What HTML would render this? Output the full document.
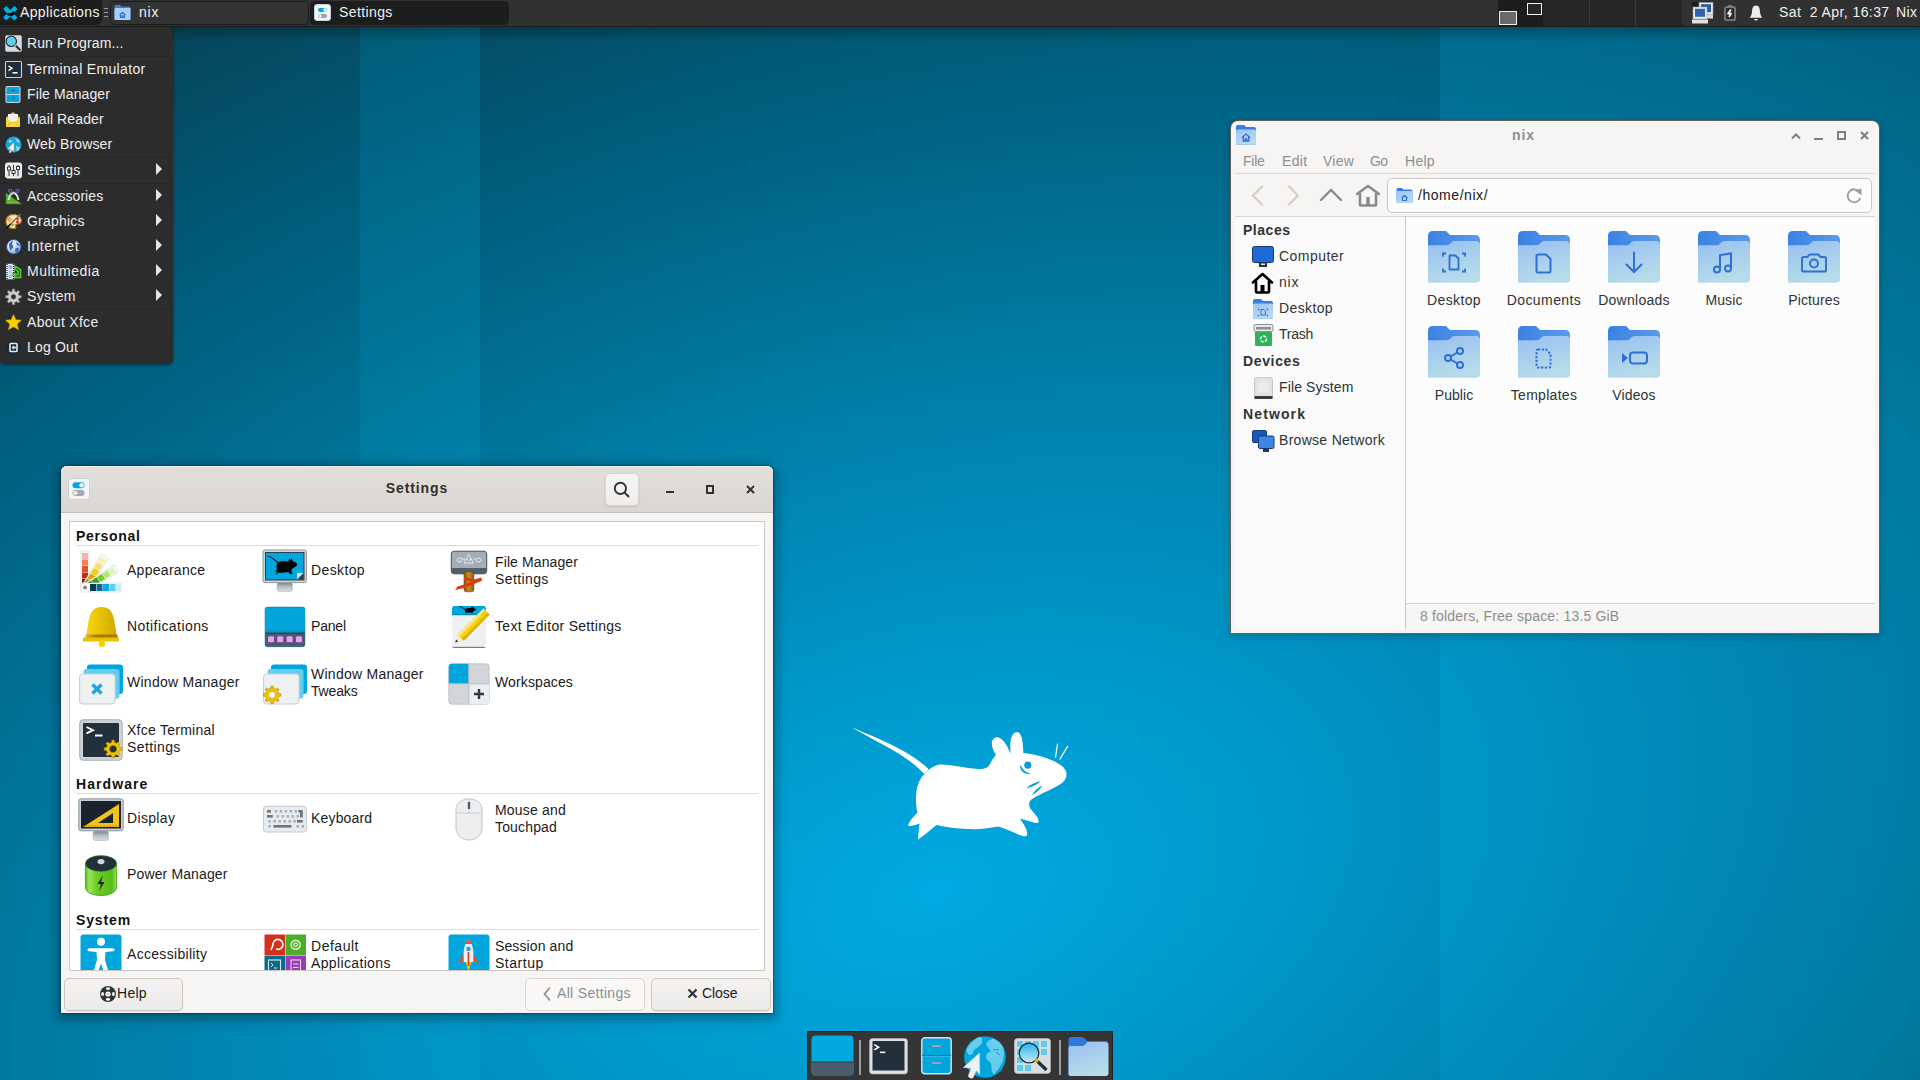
<!DOCTYPE html>
<html><head><meta charset="utf-8">
<style>
*{margin:0;padding:0;box-sizing:border-box}
html,body{width:1920px;height:1080px;overflow:hidden}
body{position:relative;font-family:"Liberation Sans",sans-serif;font-size:14px;letter-spacing:.27px;color:#222;background:#0a6a90;line-height:1}
.a{position:absolute}
.b{font-weight:bold;letter-spacing:.6px}
.nw{white-space:nowrap}
svg.i{position:absolute;display:block;overflow:visible}
#bg{left:0;top:0;width:1920px;height:1080px;
background:radial-gradient(ellipse 3599px 2665px at 1056px 1077px, rgb(0,168,224) 0%, rgb(0,165,219) 5%, rgb(0,159,211) 10%, rgb(0,151,200) 15%, rgb(0,141,187) 20%, rgb(0,130,172) 25%, rgb(0,118,156) 30%, rgb(0,105,138) 35%, rgb(1,90,118) 40%, rgb(6,74,96) 45%, rgb(6,56,72) 50%);}
.band{top:26px;height:1054px}
#panel{left:0;top:0;width:1920px;height:27px;background:#313131;border-bottom:1px solid #1c1c1c}
.ptxt{color:#f0f0f0;top:5px}
#menu{left:0;top:27px;width:173px;height:337px;background:#2c2c2c;border-radius:0 5px 5px 5px;box-shadow:0 1px 3px rgba(0,0,0,.5)}
.mi{left:27px;color:#eeeeee}
.msep{left:0;width:173px;height:1px;background:#262626}
.arr{left:156px;width:0;height:0;border-top:6px solid transparent;border-bottom:6px solid transparent;border-left:6px solid #e6e6e6}
.win{background:#f6f5f4;box-shadow:0 0 0 1px rgba(0,20,30,.3),0 3px 12px 3px rgba(0,0,0,.35)}
.st{color:#1a1a1a}
.hdr{color:#111;font-weight:bold;letter-spacing:.6px}
.sep{height:1px;background:#dedcda}
.btn{border:1px solid #cdc7c2;border-radius:5px;background:linear-gradient(#f4f3f2,#edebe9);box-shadow:0 1px 1px rgba(0,0,0,.07)}
.fmt{color:#2e3436}
.mt{color:#8b8e8f}
</style></head><body>
<div class="a" style="left:0px;top:0;width:360px;height:1080px;overflow:hidden"><div class="a" style="left:-2067.0px;top:-2108.4px;width:6000px;height:6000px;transform:rotate(-15.949deg);background:radial-gradient(ellipse 2240px 1369px at 3000px 3000px, rgb(0,172,230) 0%, rgb(0,162,216) 10%, rgb(0,150,199) 20%, rgb(0,137,182) 30%, rgb(0,124,164) 40%, rgb(0,110,146) 50%, rgb(0,96,127) 60%, rgb(2,82,108) 70%, rgb(6,68,88) 80%, rgb(6,53,68) 90%, rgb(6,38,48) 100%)"></div></div>
<div class="a" style="left:360px;top:0;width:120px;height:1080px;overflow:hidden"><div class="a" style="left:-2427.0px;top:-2108.4px;width:6000px;height:6000px;transform:rotate(-15.949deg);background:radial-gradient(ellipse 2240px 1369px at 3000px 3000px, rgb(0,170,224) 0%, rgb(0,162,213) 10%, rgb(0,152,200) 20%, rgb(0,141,186) 30%, rgb(0,130,171) 40%, rgb(0,119,156) 50%, rgb(0,108,141) 60%, rgb(0,96,125) 70%, rgb(1,84,109) 80%, rgb(5,72,93) 90%, rgb(6,60,77) 100%)"></div></div>
<div class="a" style="left:480px;top:0;width:960px;height:1080px;overflow:hidden"><div class="a" style="left:-2547.0px;top:-2108.4px;width:6000px;height:6000px;transform:rotate(-15.949deg);background:radial-gradient(ellipse 2240px 1369px at 3000px 3000px, rgb(0,170,226) 0%, rgb(0,159,212) 10%, rgb(0,147,195) 20%, rgb(0,134,178) 30%, rgb(0,120,159) 40%, rgb(0,106,141) 50%, rgb(0,92,121) 60%, rgb(4,77,102) 70%, rgb(6,62,82) 80%, rgb(6,47,62) 90%, rgb(6,32,41) 100%)"></div></div>
<div class="a" style="left:1440px;top:0;width:480px;height:1080px;overflow:hidden"><div class="a" style="left:-3507.0px;top:-2108.4px;width:6000px;height:6000px;transform:rotate(-15.949deg);background:radial-gradient(ellipse 2240px 1369px at 3000px 3000px, rgb(0,174,228) 0%, rgb(0,165,217) 10%, rgb(0,154,203) 20%, rgb(0,143,189) 30%, rgb(0,131,174) 40%, rgb(0,120,158) 50%, rgb(0,107,142) 60%, rgb(0,95,126) 70%, rgb(2,82,109) 80%, rgb(6,69,93) 90%, rgb(6,56,76) 100%)"></div></div>

<div class="a" style="left:0;top:26px;width:1920px;height:16px;background:linear-gradient(180deg,rgba(0,0,0,.28),rgba(0,0,0,0))"></div>

<!-- PANEL -->
<div id="panel" class="a">
  <div class="a" style="left:0;top:0;width:102px;height:25px;background:#1d1d1d;border-radius:0 0 6px 0"></div>
  <svg class="i" style="left:3px;top:6px" width="15" height="15" viewBox="0 0 15 15">
    <path d="M1.7 1.5 L12.9 13 M12.9 1.5 L1.7 13" stroke="#00b4e6" stroke-width="4.4"/>
    <path d="M3.6 8.2 C4.5 7 7 7.2 9.2 6.6 L10.5 4.6 L11 6.4 L12 7 C11.6 8.6 10.5 9.3 9.5 9.5 L9.2 10.6 L8.2 9.7 C6.5 9.8 4.5 9.8 3.6 8.2Z" fill="#000"/>
  </svg>
  <div class="a ptxt nw" style="left:20px;letter-spacing:0.355px;">Applications</div>
  <div class="a" style="left:104px;top:8px;width:4px;height:1px;background:#9a9a9a"></div>
  <div class="a" style="left:104px;top:12px;width:4px;height:1px;background:#9a9a9a"></div>
  <div class="a" style="left:104px;top:16px;width:4px;height:1px;background:#9a9a9a"></div>
  <div class="a" style="left:110px;top:1px;width:199px;height:24px;background:#333333;border:1px solid #1b1b1b;border-radius:5px"></div>
  <svg class="i" style="left:114px;top:4px" width="17" height="17" viewBox="0 0 17 17">
    <path d="M0.5 2.5 q0-1.5 1.5-1.5 h4 l1.5 1.5 h7.5 q1.5 0 1.5 1.5 v11 q0 1-1 1 h-14 q-1 0-1-1z" fill="#3a7de0"/>
    <path d="M0.5 5 q0-1 1-1 h14 q1 0 1 1 v10 q0 1-1 1 h-14 q-1 0-1-1z" fill="#a9cdf5"/>
    <path d="M5.5 11 l3-2.6 l3 2.6 M6.5 10.3 v3.2 h4 v-3.2 M8 13.5 v-1.6 h1 v1.6" stroke="#2f6fd6" stroke-width="1.1" fill="none"/>
  </svg>
  <div class="a ptxt nw" style="left:139px;letter-spacing:0.820px;">nix</div>
  <div class="a" style="left:310px;top:1px;width:199px;height:24px;background:#1d1d1d;border-radius:5px"></div>
  <svg class="i" style="left:314px;top:4px" width="17" height="17" viewBox="0 0 17 17">
    <rect x="0.5" y="0.5" width="16" height="16" rx="2.5" fill="#f3f4f6" stroke="#c8d0d8" stroke-width="1"/>
    <rect x="4" y="4" width="9" height="4" rx="2" fill="#00a8dc"/><circle cx="11" cy="6" r="1.7" fill="#fff"/>
    <rect x="4" y="10" width="9" height="4" rx="2" fill="#9aa3ab"/><circle cx="6" cy="12" r="1.7" fill="#e8eaec"/>
  </svg>
  <div class="a ptxt nw" style="left:339px;letter-spacing:0.388px;">Settings</div>
  <!-- pager -->
  <div class="a" style="left:1498px;top:0;width:45px;height:26px;background:#1c1c1c"></div>
  <div class="a" style="left:1543px;top:0;width:139px;height:26px;background:#262626"></div>
  <div class="a" style="left:1589px;top:0;width:1px;height:26px;background:#3a3a3a"></div>
  <div class="a" style="left:1635px;top:0;width:1px;height:26px;background:#3a3a3a"></div>
  <div class="a" style="left:1499px;top:11px;width:18px;height:14px;background:#6a6a6a;border:1px solid #f0f0f0"></div>
  <div class="a" style="left:1527px;top:3px;width:15px;height:12px;background:#262626;border:1px solid #f0f0f0"></div>
  <!-- systray -->
  <svg class="i" style="left:1692px;top:2px" width="22" height="22" viewBox="0 0 22 22">
    <rect x="0" y="0" width="7" height="8" fill="#1d1d1d"/>
    <rect x="7" y="0.5" width="14" height="12" fill="#eeeeec" stroke="#9a9a98" stroke-width=".6"/>
    <rect x="9" y="2.2" width="10" height="8" fill="#2a5aa6"/>
    <rect x="10" y="12.5" width="11" height="4" fill="#dcdcd6"/>
    <rect x="1" y="5" width="14" height="12" fill="#eeeeec" stroke="#9a9a98" stroke-width=".6"/>
    <rect x="3" y="6.8" width="10" height="8" fill="#2f62b0"/>
    <rect x="0" y="17.5" width="16" height="4" fill="#e2e2dc"/>
  </svg>
  <svg class="i" style="left:1724px;top:5px" width="12" height="16" viewBox="0 0 12 16">
    <rect x="4" y="0" width="4" height="2" fill="#7a7a7a"/>
    <rect x="0.9" y="2" width="10.2" height="13.2" rx="2" fill="#2a2a2a" stroke="#7a7a7a" stroke-width="1.8"/>
    <path d="M7 4.5 L4 8.5 h3 L5 12" stroke="#f0f0f0" stroke-width="1.8" fill="none" stroke-linejoin="round"/>
  </svg>
  <svg class="i" style="left:1749px;top:5px" width="14" height="16" viewBox="0 0 14 16">
    <path d="M7 0.6 C3.8 0.6 3.2 3.5 3 7 C2.8 10 1.5 11.5 0.8 12.8 H13.2 C12.5 11.5 11.2 10 11 7 C10.8 3.5 10.2 0.6 7 0.6Z" fill="#ececec"/>
    <path d="M5 14 h4 q-.5 1.5-2 1.5 q-1.5 0-2-1.5z" fill="#ececec"/>
  </svg>
  <div class="a ptxt nw" style="left:1779px;letter-spacing:0.413px;">Sat&nbsp; 2 Apr, 16:37</div>
  <div class="a ptxt nw" style="left:1896px;letter-spacing:0.398px;">Nix</div>
</div>
<svg class="i" style="left:0;top:0" width="1920" height="1080" viewBox="0 0 1920 1080">
<path d="M852.1 727.6 C866 733.5 884 741 895 746.5 C908 753 920 761 928.8 769.2 L924.2 774 C916 765 906 758 896 752 C884 745 866 736 852.1 727.6Z" fill="#fff"/>
<path d="M924.5 774 C932 766 937 764.5 942 764.5 C953 765 965 768 978 769 C986 769.5 989 767 991 762 C993 758 995 756 996 755 C992 749 990 742 994 738.5 C998 735 1003 739 1007 746 L1010.5 753.5 C1010 744 1010 734 1016 732.3 C1021 731 1023 738 1023.3 753 C1035 754.5 1052 758 1062 766 C1068 771 1068 778 1062 783 C1055 788 1042 793 1032 799 C1028 802 1028.5 806 1031.5 810 C1035 814 1039 818 1038.5 822 C1038 824.5 1033 822 1020 818.5 C1024 825 1028 830 1027 835 C1026 837.5 1022 836 1015 833 C1008 830 1002 827.5 998 826.5 C988 828.5 978 829.5 968 829 C957 828.5 946 827.5 936.5 825 C930 830 925 835 918 839.5 C918.5 833 919 828 919.5 823.5 C915 825 911 826.5 908.5 826 C907.5 824 912 818 917.5 812.5 C915.5 805 915.5 796 917 788 C918.5 782 921 777 924.5 774Z" fill="#fff"/>
<circle cx="1027.8" cy="765.2" r="3.6" fill="#0a9dd4"/>
<path d="M1020.3 764.3 C1019.2 770.5 1024 775.2 1031.3 773.8 C1025.8 772.8 1022.3 769.5 1020.3 764.3Z" fill="#0aa0d6"/>
<path d="M1026.2 788.3 C1030.5 784.2 1036 781.8 1041 781 C1038 784 1032.5 787 1026.2 788.3Z" fill="#0aa0d6"/>
<path d="M1032 795.2 C1034.5 790.8 1038.3 787.3 1042.3 785.3 C1040.3 789.3 1036.5 792.8 1032 795.2Z" fill="#0aa0d6"/>
<path d="M1055.5 757.5 L1057.5 744" stroke="#fff" stroke-width="1.2" stroke-linecap="round"/>
<path d="M1060 759 L1067.5 746.5" stroke="#fff" stroke-width="1.4" stroke-linecap="round"/>
</svg>
<div id="menu" class="a">
<div class="a mi nw" style="top:9.2px;letter-spacing:0.106px;">Run Program...</div>
<svg class="i" style="left:5px;top:8px" width="17" height="17" viewBox="0 0 17 17"><rect x="0.5" y="0.5" width="16" height="16" rx="1.5" fill="#d6dbe0" stroke="#b8bec4" stroke-width=".8"/>
<circle cx="6.3" cy="6.3" r="5.2" fill="#62cdec" stroke="#203040" stroke-width="1.2"/>
<path d="M10 10 L15.3 15.3" stroke="#203040" stroke-width="2.2"/><path d="M9.7 9.7 L11 11" stroke="#e5b800" stroke-width="2"/></svg>
<div class="a mi nw" style="top:35.2px;letter-spacing:0.335px;">Terminal Emulator</div>
<svg class="i" style="left:5px;top:34px" width="17" height="17" viewBox="0 0 17 17"><rect x="0.5" y="0.5" width="16" height="16" rx="1" fill="#1f2e3b" stroke="#c9ced3" stroke-width="1.1"/>
<path d="M3.5 5 L7 7.3 L3.5 9.6" stroke="#fff" stroke-width="1.4" fill="none"/><rect x="7.5" y="11" width="5" height="1.6" fill="#fff"/></svg>
<div class="a mi nw" style="top:60.2px;letter-spacing:0.109px;">File Manager</div>
<svg class="i" style="left:5px;top:59px" width="17" height="17" viewBox="0 0 17 17"><rect x="1" y="0.5" width="14" height="16" rx="1.5" fill="#00a6dc" stroke="#cfd6dc" stroke-width="1.1"/>
<path d="M1.5 8.5 h13" stroke="#d6dde2" stroke-width="1"/><path d="M6.5 4.5h3M6.5 12h3" stroke="#3a4a56" stroke-width="1"/></svg>
<div class="a mi nw" style="top:85.2px;letter-spacing:0.111px;">Mail Reader</div>
<svg class="i" style="left:5px;top:84px" width="17" height="17" viewBox="0 0 17 17"><path d="M1 6.5 L8 1 L15 6.5 V16 H1Z" fill="#f2c400"/><rect x="3" y="3" width="10" height="8" fill="#eef0f2"/>
<path d="M1 7 L8 12 L15 7 V16 H1Z" fill="#f6d84a"/><path d="M1 16 L6.5 11 M15 16 L9.5 11" stroke="#e0b800" stroke-width=".8"/></svg>
<div class="a mi nw" style="top:110.2px;letter-spacing:0.139px;">Web Browser</div>
<svg class="i" style="left:5px;top:109px" width="17" height="17" viewBox="0 0 17 17"><circle cx="8.5" cy="8.5" r="8" fill="#1ea3d6"/><path d="M4 4 q2-1 3 1 q-1 2-3 2z M10 2 q3 1 5 4 q-2 1-3 0 q-1-2-2-4z M11 10 q3 0 4 2 q-1 3-3 3 q-1-2-1-5z" fill="#8fd8f2"/>
<path d="M9 6 L2.5 13 L5.5 13.3 L3.8 16.5 L5.5 17 L7 14 L9.3 15.8Z" fill="#f2f4f6" stroke="#6a7a88" stroke-width=".4"/></svg>
<div class="a mi nw" style="top:136.2px;letter-spacing:0.388px;">Settings</div>
<svg class="i" style="left:5px;top:135px" width="17" height="17" viewBox="0 0 17 17"><rect x="0.5" y="1" width="16" height="15" rx="2" fill="#e6e7e8" stroke="#f8f8f8" stroke-width="1"/>
<path d="M4 3v11M8.5 3v11M13 3v11" stroke="#303a42" stroke-width="1"/><rect x="2.5" y="5" width="3" height="3" fill="#fff" stroke="#303a42" stroke-width="1"/><rect x="7" y="8.5" width="3" height="3" fill="#fff" stroke="#303a42" stroke-width="1"/><rect x="11.5" y="4.5" width="3" height="3" fill="#fff" stroke="#303a42" stroke-width="1"/></svg>
<div class="a mi nw" style="top:162.2px;letter-spacing:0.069px;">Accessories</div>
<svg class="i" style="left:5px;top:161px" width="17" height="17" viewBox="0 0 17 17"><path d="M1 5 L1 16 L16.5 16Z" fill="#56b02a" stroke="#3a8a18" stroke-width=".6"/><path d="M3.3 10.5 L3.3 14 L8 14Z" fill="#2a2a2a" opacity=".0"/><path d="M3 14.5 h11" stroke="#9ad36a" stroke-width=".8" stroke-dasharray="1 1"/>
<path d="M3.5 12 Q5 5 8.5 5 Q12 5 13.5 12" stroke="#e0e0e0" stroke-width="2" fill="none"/><path d="M8.5 5.5 v-2" stroke="#bbb" stroke-width="1.2"/>
<circle cx="5" cy="2.8" r="1.6" fill="#2a2a2a" stroke="#3a72c8" stroke-width="1.1"/><circle cx="12.5" cy="2.8" r="1.6" fill="#2a2a2a" stroke="#3a72c8" stroke-width="1.1"/></svg>
<div class="a mi nw" style="top:187.2px;letter-spacing:0.199px;">Graphics</div>
<svg class="i" style="left:5px;top:186px" width="17" height="17" viewBox="0 0 17 17"><path d="M8.5 1.5 C3.5 1.5 1 5 1 8.5 C1 13 4.5 15.5 8.5 15.5 C11 15.5 11.5 14 10.5 12.8 C9.8 11.8 10.6 11 12 11 C15 11 16.3 9.5 16.3 7.5 C16.3 3.8 12.8 1.5 8.5 1.5Z" fill="#f4e2c4" stroke="#c47a18" stroke-width="1.2"/>
<circle cx="4.5" cy="6.5" r="1.5" fill="none" stroke="#c47a18" stroke-width="1"/><circle cx="12.5" cy="5.8" r="1.4" fill="#2a6ad0"/><circle cx="12.5" cy="9" r="1.4" fill="#e02020"/><circle cx="7.5" cy="12" r="1.4" fill="#60c020"/>
<path d="M15.5 1.2 L5 11.5" stroke="#a06a20" stroke-width="1.5"/><path d="M5.5 11 L1.5 15.5" stroke="#111" stroke-width="1.8"/></svg>
<div class="a mi nw" style="top:212.2px;letter-spacing:0.592px;">Internet</div>
<svg class="i" style="left:5px;top:211px" width="17" height="17" viewBox="0 0 17 17"><defs><radialGradient id="gl" cx=".35" cy=".3" r=".8"><stop offset="0" stop-color="#ffffff"/><stop offset=".6" stop-color="#b8cce8"/><stop offset="1" stop-color="#7a98c8"/></radialGradient></defs>
<circle cx="8.8" cy="8.8" r="7.3" fill="url(#gl)" stroke="#284a88" stroke-width="1"/>
<path d="M4 6 q2-3 4-3 q0 2-1 3 q2 2 1 4 q-2 1-2 3 q-2-2-2-7z M10 11 q2-2 4-1 q0 3-2 5 q-2 0-2-4z M11 4 q3 1 4 4 q-2 0-3-1z" fill="#3a6cb8"/></svg>
<div class="a mi nw" style="top:237.2px;letter-spacing:0.510px;">Multimedia</div>
<svg class="i" style="left:5px;top:236px" width="17" height="17" viewBox="0 0 17 17"><rect x="1" y="0.8" width="8.5" height="15.5" fill="#f0f0f0"/><path d="M2 1v15M8.5 1v15" stroke="#222" stroke-width="1.4" stroke-dasharray="1 1"/>
<rect x="3.5" y="2" width="3.5" height="4" fill="#8cc0ec"/><rect x="3.5" y="6.8" width="3.5" height="4" fill="#a8d0f0"/><rect x="3.5" y="11.6" width="3.5" height="3.8" fill="#8cc0ec"/>
<path d="M10.5 3.5 L15.5 6.5 V14.5 H10.5 V11.5 H13 V8 L10.5 6.8Z" fill="none" stroke="#4cc52a" stroke-width="1.8" stroke-linejoin="round"/><path d="M7 11.5 h4" stroke="#4cc52a" stroke-width="2.5"/></svg>
<div class="a mi nw" style="top:262.2px;letter-spacing:0.356px;">System</div>
<svg class="i" style="left:5px;top:261px" width="17" height="17" viewBox="0 0 17 17"><path d="M13.97 7.60 L16.23 7.73 L16.23 9.87 L13.97 10.00 L13.22 11.82 L14.72 13.51 L13.21 15.02 L11.52 13.52 L9.70 14.27 L9.57 16.53 L7.43 16.53 L7.30 14.27 L5.48 13.52 L3.79 15.02 L2.28 13.51 L3.78 11.82 L3.03 10.00 L0.77 9.87 L0.77 7.73 L3.03 7.60 L3.78 5.78 L2.28 4.09 L3.79 2.58 L5.48 4.08 L7.30 3.33 L7.43 1.07 L9.57 1.07 L9.70 3.33 L11.52 4.08 L13.21 2.58 L14.72 4.09 L13.22 5.78Z" fill="#cfcfcd" stroke="#8a8a88" stroke-width=".7" stroke-linejoin="round"/><circle cx="8.5" cy="8.8" r="2.5" fill="#2c2c2c" stroke="#8a8a88" stroke-width=".6"/></svg>
<div class="a mi nw" style="top:288.2px;letter-spacing:0.299px;">About Xfce</div>
<svg class="i" style="left:5px;top:287px" width="17" height="17" viewBox="0 0 17 17"><path d="M8.5 0.5 L10.8 5.7 L16.5 6.2 L12.2 10 L13.5 15.8 L8.5 12.8 L3.5 15.8 L4.8 10 L0.5 6.2 L6.2 5.7Z" fill="#f6d200" stroke="#d8a800" stroke-width=".5"/></svg>
<div class="a mi nw" style="top:313.2px;letter-spacing:0.185px;">Log Out</div>
<svg class="i" style="left:5px;top:312px" width="17" height="17" viewBox="0 0 17 17"><circle cx="8.5" cy="8.5" r="7.8" fill="#1a2a36"/><rect x="5" y="4.5" width="7" height="8" rx=".8" fill="none" stroke="#e8eaec" stroke-width="1.6"/><path d="M11 8.5 H7.5 M9 7 L7.5 8.5 L9 10" stroke="#e8eaec" stroke-width="1.3" fill="none"/></svg>
<div class="a msep" style="top:29px"></div>
<div class="a msep" style="top:130px"></div>
<div class="a msep" style="top:156px"></div>
<div class="a msep" style="top:282px"></div>
<div class="a arr" style="top:136.2px"></div>
<div class="a arr" style="top:162.2px"></div>
<div class="a arr" style="top:187.2px"></div>
<div class="a arr" style="top:212.2px"></div>
<div class="a arr" style="top:237.2px"></div>
<div class="a arr" style="top:262.2px"></div>
</div>
<div id="fm" class="a win" style="left:1231px;top:121px;width:648px;height:512px;border-radius:7px 7px 0 0;box-shadow:0 0 0 1px rgba(115,95,85,.8),0 3px 9px 1px rgba(0,0,0,.22)">
<svg width="0" height="0" style="position:absolute"><defs>
<linearGradient id="fgs" x1="0" y1="0" x2="0.4" y2="1"><stop offset="0" stop-color="#9ec4f4"/><stop offset="1" stop-color="#b8dcee"/></linearGradient>
<linearGradient id="fgb" x1="0" y1="0" x2="0.35" y2="1"><stop offset="0" stop-color="#98bff2"/><stop offset="1" stop-color="#b6dcea"/></linearGradient>
<linearGradient id="ftb" x1="0" y1="0" x2="1" y2="0"><stop offset="0" stop-color="#3a82e2"/><stop offset="1" stop-color="#5b9ae8"/></linearGradient>
</defs></svg>
<svg class="i" style="left:4px;top:3px" width="22" height="22" viewBox="0 0 22 22"><path d="M1 3 q0-2 2-2 h6 l2 2 h8 q2 0 2 2 v14 q0 1.5-1.5 1.5 h-17 q-1.5 0-1.5-1.5z" fill="#3a7de0"/>
<path d="M1 7 q0-1.5 1.5-1.5 h17 q1.5 0 1.5 1.5 v12 q0 1.5-1.5 1.5 h-17 q-1.5 0-1.5-1.5z" fill="url(#fgs)"/><path d="M7 13.5 l4-3.5 l4 3.5 M8.3 12.6 v4.4 h5.4 v-4.4 M10.2 17 v-2.2 h1.6 v2.2" stroke="#2f6fd6" stroke-width="1.3" fill="none"/></svg>
<div class="a nw" style="left:281px;top:7.2px;font-weight:bold;letter-spacing:0.938px;color:#8b8e8f">nix</div>
<svg class="i" style="left:560px;top:10px" width="10" height="9" viewBox="0 0 10 9"><path d="M1 7.5 L5 3.5 L9 7.5" stroke="#7d8183" stroke-width="2" fill="none"/></svg>
<div class="a" style="left:583px;top:17px;width:9px;height:2px;background:#7d8183"></div>
<div class="a" style="left:606px;top:10px;width:9px;height:9px;border:2px solid #7d8183"></div>
<svg class="i" style="left:629px;top:10px" width="9" height="9" viewBox="0 0 9 9"><path d="M1 1 L8 8 M8 1 L1 8" stroke="#7d8183" stroke-width="2"/></svg>
<div class="a nw mt" style="left:12px;top:33.2px;letter-spacing:-0.266px;">File</div>
<div class="a nw mt" style="left:51px;top:33.2px;letter-spacing:0.349px;">Edit</div>
<div class="a nw mt" style="left:92px;top:33.2px;letter-spacing:0.250px;">View</div>
<div class="a nw mt" style="left:139px;top:33.2px;letter-spacing:-0.641px;">Go</div>
<div class="a nw mt" style="left:174px;top:33.2px;letter-spacing:0.286px;">Help</div>
<div class="a" style="left:4px;top:52px;width:640px;height:1px;background:#dedad6"></div>
<svg class="i" style="left:19px;top:64px" width="14" height="21" viewBox="0 0 14 21"><path d="M12 1.5 L3 10.5 L12 19.5" stroke="#d2cecb" stroke-width="2.2" fill="none" stroke-linecap="round"/></svg>
<svg class="i" style="left:56px;top:64px" width="14" height="21" viewBox="0 0 14 21"><path d="M2 1.5 L11 10.5 L2 19.5" stroke="#d2cecb" stroke-width="2.2" fill="none" stroke-linecap="round"/></svg>
<svg class="i" style="left:88px;top:67px" width="24" height="14" viewBox="0 0 24 14"><path d="M2 12 L12 2 L22 12" stroke="#868c8e" stroke-width="2.3" fill="none" stroke-linecap="round"/></svg>
<svg class="i" style="left:124px;top:63px" width="26" height="23" viewBox="0 0 26 23"><path d="M2 10 L13 2 L24 10" stroke="#868c8e" stroke-width="2.4" fill="none" stroke-linecap="round" stroke-linejoin="round"/><path d="M5 9 V20.5 q0 1 1 1 H20 q1 0 1-1 V9" stroke="#868c8e" stroke-width="2.6" fill="none"/><rect x="11.3" y="13" width="3.4" height="8" fill="#868c8e"/></svg>
<div class="a" style="left:156px;top:57px;width:485px;height:35px;border:1px solid #cdc7c2;border-radius:5px;background:#fcfcfc"></div>
<svg class="i" style="left:165px;top:66px" width="17" height="17" viewBox="0 0 17 17"><path d="M0.5 2.5 q0-1.5 1.5-1.5 h4 l1.5 1.5 h7.5 q1.5 0 1.5 1.5 v11 q0 1-1 1 h-14 q-1 0-1-1z" fill="#3a7de0"/><path d="M0.5 5 q0-1 1-1 h14 q1 0 1 1 v10 q0 1-1 1 h-14 q-1 0-1-1z" fill="url(#fgs)"/><path d="M5.5 11 l3-2.6 l3 2.6 M6.5 10.3 v3.2 h4 v-3.2" stroke="#2f6fd6" stroke-width="1.1" fill="none"/></svg>
<div class="a nw st" style="left:187px;top:67.2px;letter-spacing:0.549px;">/home/nix/</div>
<svg class="i" style="left:614px;top:66px" width="18" height="17" viewBox="0 0 18 17"><path d="M14.5 5 A6.5 6.5 0 1 0 15.3 11" stroke="#9a9ea0" stroke-width="1.8" fill="none"/><path d="M10.5 4 L16 2 L16 8" fill="#9a9ea0" stroke="#9a9ea0" stroke-width="1"/></svg>
<div class="a" style="left:4px;top:95px;width:640px;height:1px;background:#d8d4d0"></div>
<div class="a" style="left:4px;top:96px;width:170px;height:412px;background:#fafafa"></div>
<div class="a" style="left:174px;top:96px;width:1px;height:412px;background:#cdc7c2"></div>
<div class="a" style="left:175px;top:96px;width:469px;height:386px;background:#fcfcfc"></div>
<div class="a" style="left:175px;top:482px;width:469px;height:1px;background:#d8d4d0"></div>
<div class="a nw fmt b" style="left:12px;top:102.2px;letter-spacing:0.528px;">Places</div>
<div class="a nw fmt b" style="left:12px;top:233.1px;letter-spacing:0.646px;">Devices</div>
<div class="a nw fmt b" style="left:12px;top:286.1px;letter-spacing:1.115px;">Network</div>
<div class="a nw fmt" style="left:48px;top:128.2px;letter-spacing:0.453px;">Computer</div>
<div class="a nw fmt" style="left:48px;top:154.1px;letter-spacing:0.820px;">nix</div>
<div class="a nw fmt" style="left:48px;top:180.1px;letter-spacing:0.378px;">Desktop</div>
<div class="a nw fmt" style="left:48px;top:206.1px;letter-spacing:-0.227px;">Trash</div>
<div class="a nw fmt" style="left:48px;top:259.1px;letter-spacing:0.122px;">File System</div>
<div class="a nw fmt" style="left:48px;top:312.1px;letter-spacing:0.294px;">Browse Network</div>
<svg class="i" style="left:21px;top:125px" width="22" height="22" viewBox="0 0 22 22"><rect x="0.5" y="0.5" width="21" height="16" rx="2" fill="#1e6ad8" stroke="#1a3a60" stroke-width="1"/><rect x="7" y="17" width="8" height="4" fill="#2a3640"/><rect x="9" y="17.5" width="4" height="1.5" fill="#e8e8e8"/></svg>
<svg class="i" style="left:20px;top:151px" width="23" height="22" viewBox="0 0 23 22"><path d="M2 10.5 L11.5 2 L21 10.5" stroke="#000" stroke-width="2.6" fill="none" stroke-linejoin="round" stroke-linecap="round"/><path d="M5 9 V19.5 q0 1 1 1 H17 q1 0 1-1 V9" stroke="#000" stroke-width="2.6" fill="none"/><rect x="9.5" y="13" width="4" height="8" fill="#000"/></svg>
<svg class="i" style="left:21px;top:177px" width="22" height="22" viewBox="0 0 22 22"><path d="M1 3 q0-2 2-2 h6 l2 2 h8 q2 0 2 2 v14 q0 1.5-1.5 1.5 h-17 q-1.5 0-1.5-1.5z" fill="#3a7de0"/>
<path d="M1 7 q0-1.5 1.5-1.5 h17 q1.5 0 1.5 1.5 v12 q0 1.5-1.5 1.5 h-17 q-1.5 0-1.5-1.5z" fill="url(#fgs)"/><path d="M7.5 11 h-1.2 v1.5 M14.5 11 h1.2 v1.5 M7.5 18 h-1.2 v-1.5 M14.5 18 h1.2 v-1.5" stroke="#2f6fd6" stroke-width="1" fill="none"/><path d="M9 11.5 h3 l1.3 1.3 v4.2 h-4.3z" stroke="#2f6fd6" stroke-width="1" fill="none"/></svg>
<svg class="i" style="left:22px;top:203px" width="22" height="23" viewBox="0 0 22 23"><rect x="1" y="0.5" width="19" height="7" rx="1.5" fill="#e8e8e8" stroke="#909090" stroke-width="1"/><rect x="3" y="3" width="15" height="2.5" fill="#909090"/><path d="M2 8 H19 V20.5 q0 1.5-1.5 1.5 H3.5 q-1.5 0-1.5-1.5z" fill="#2eb35a"/><circle cx="10.5" cy="15" r="3" fill="none" stroke="#fff" stroke-width="1.4" stroke-dasharray="3 1.5"/></svg>
<svg class="i" style="left:23px;top:256px" width="19" height="23" viewBox="0 0 19 23"><rect x="0.5" y="0.5" width="18" height="21" rx="2.5" fill="#e2e2e2" stroke="#c8c8c8" stroke-width="1"/><circle cx="9.5" cy="10" r="6" fill="#ececec"/><rect x="0.5" y="19" width="18" height="3" fill="#3a3a3a"/></svg>
<svg class="i" style="left:21px;top:309px" width="23" height="23" viewBox="0 0 23 23"><rect x="0.5" y="0.5" width="14" height="12" rx="1.5" fill="#1a58b8" stroke="#163a78" stroke-width="1"/><rect x="6.5" y="6" width="15.5" height="12.5" rx="1.5" fill="#3d86e6" stroke="#163a78" stroke-width="1"/><rect x="11" y="19" width="6" height="3" fill="#2a3640"/></svg>
<svg class="i" style="left:197px;top:110px" width="52" height="52" viewBox="0 0 52 52"><path d="M0 5 q0-5 5-5 h13 l4 4 h25 q5 0 5 5 v38 q0 4-4 4 h-48z" fill="url(#ftb)"/>
<path d="M0 14.2 h18.5 q2 0 3.5-1.5 l1.5-1.5 q1.5-1.2 3.5-1.2 h21 q4 0 4 4 v33.7 q0 4-4 4 h-48z" fill="url(#fgb)"/><g transform="translate(0 2.5)"><path d="M15 23 v-3 h3 M37 23 v-3 h-3 M15 35 v3 h3 M37 35 v3 h-3" stroke="#2f6fd6" stroke-width="1.8" fill="none"/><path d="M21.5 22 h6 l3 3 v11 h-9z" stroke="#2f6fd6" stroke-width="1.8" fill="none" stroke-linejoin="round"/></g></svg>
<div class="a nw fmt" style="left:178px;width:90px;text-align:center;top:171.6px;letter-spacing:0.378px;">Desktop</div>
<svg class="i" style="left:287px;top:110px" width="52" height="52" viewBox="0 0 52 52"><path d="M0 5 q0-5 5-5 h13 l4 4 h25 q5 0 5 5 v38 q0 4-4 4 h-48z" fill="url(#ftb)"/>
<path d="M0 14.2 h18.5 q2 0 3.5-1.5 l1.5-1.5 q1.5-1.2 3.5-1.2 h21 q4 0 4 4 v33.7 q0 4-4 4 h-48z" fill="url(#fgb)"/><g transform="translate(0 2.5)"><path d="M20 21 h8 l4.5 4.5 v12 q0 1.5-1.5 1.5 h-11 q-1.5 0-1.5-1.5 v-15 q0-1.5 1.5-1.5z" stroke="#2f6fd6" stroke-width="2" fill="none" stroke-linejoin="round"/></g></svg>
<div class="a nw fmt" style="left:268px;width:90px;text-align:center;top:171.6px;letter-spacing:0.414px;">Documents</div>
<svg class="i" style="left:377px;top:110px" width="52" height="52" viewBox="0 0 52 52"><path d="M0 5 q0-5 5-5 h13 l4 4 h25 q5 0 5 5 v38 q0 4-4 4 h-48z" fill="url(#ftb)"/>
<path d="M0 14.2 h18.5 q2 0 3.5-1.5 l1.5-1.5 q1.5-1.2 3.5-1.2 h21 q4 0 4 4 v33.7 q0 4-4 4 h-48z" fill="url(#fgb)"/><g transform="translate(0 2.5)"><path d="M26 19 v19 M18.5 31 L26 38.5 L33.5 31" stroke="#2f6fd6" stroke-width="2" fill="none" stroke-linecap="round"/></g></svg>
<div class="a nw fmt" style="left:358px;width:90px;text-align:center;top:171.6px;letter-spacing:0.268px;">Downloads</div>
<svg class="i" style="left:467px;top:110px" width="52" height="52" viewBox="0 0 52 52"><path d="M0 5 q0-5 5-5 h13 l4 4 h25 q5 0 5 5 v38 q0 4-4 4 h-48z" fill="url(#ftb)"/>
<path d="M0 14.2 h18.5 q2 0 3.5-1.5 l1.5-1.5 q1.5-1.2 3.5-1.2 h21 q4 0 4 4 v33.7 q0 4-4 4 h-48z" fill="url(#fgb)"/><g transform="translate(0 2.5)"><path d="M22 36 v-14.5 l11-1.5 v15" stroke="#2f6fd6" stroke-width="2" fill="none"/><circle cx="19" cy="36" r="3" stroke="#2f6fd6" stroke-width="2" fill="none"/><circle cx="30" cy="35" r="3" stroke="#2f6fd6" stroke-width="2" fill="none"/></g></svg>
<div class="a nw fmt" style="left:448px;width:90px;text-align:center;top:171.6px;letter-spacing:0.105px;">Music</div>
<svg class="i" style="left:557px;top:110px" width="52" height="52" viewBox="0 0 52 52"><path d="M0 5 q0-5 5-5 h13 l4 4 h25 q5 0 5 5 v38 q0 4-4 4 h-48z" fill="url(#ftb)"/>
<path d="M0 14.2 h18.5 q2 0 3.5-1.5 l1.5-1.5 q1.5-1.2 3.5-1.2 h21 q4 0 4 4 v33.7 q0 4-4 4 h-48z" fill="url(#fgb)"/><g transform="translate(0 2.5)"><path d="M14 25 q0-1.5 1.5-1.5 h4 l2-2.5 h9 l2 2.5 h4 q1.5 0 1.5 1.5 v11.5 q0 1.5-1.5 1.5 h-21 q-1.5 0-1.5-1.5z" stroke="#2f6fd6" stroke-width="2" fill="none"/><circle cx="26" cy="30" r="4" stroke="#2f6fd6" stroke-width="2" fill="none"/></g></svg>
<div class="a nw fmt" style="left:538px;width:90px;text-align:center;top:171.6px;letter-spacing:0.129px;">Pictures</div>
<svg class="i" style="left:197px;top:205px" width="52" height="52" viewBox="0 0 52 52"><path d="M0 5 q0-5 5-5 h13 l4 4 h25 q5 0 5 5 v38 q0 4-4 4 h-48z" fill="url(#ftb)"/>
<path d="M0 14.2 h18.5 q2 0 3.5-1.5 l1.5-1.5 q1.5-1.2 3.5-1.2 h21 q4 0 4 4 v33.7 q0 4-4 4 h-48z" fill="url(#fgb)"/><g transform="translate(0 2.5)"><circle cx="32" cy="22.5" r="3" stroke="#2f6fd6" stroke-width="2" fill="none"/><circle cx="20" cy="29.5" r="3" stroke="#2f6fd6" stroke-width="2" fill="none"/><circle cx="32" cy="36.5" r="3" stroke="#2f6fd6" stroke-width="2" fill="none"/><path d="M22.7 28 L29.3 24 M22.7 31 L29.3 35" stroke="#2f6fd6" stroke-width="2"/></g></svg>
<div class="a nw fmt" style="left:178px;width:90px;text-align:center;top:266.6px;letter-spacing:0.066px;">Public</div>
<svg class="i" style="left:287px;top:205px" width="52" height="52" viewBox="0 0 52 52"><path d="M0 5 q0-5 5-5 h13 l4 4 h25 q5 0 5 5 v38 q0 4-4 4 h-48z" fill="url(#ftb)"/>
<path d="M0 14.2 h18.5 q2 0 3.5-1.5 l1.5-1.5 q1.5-1.2 3.5-1.2 h21 q4 0 4 4 v33.7 q0 4-4 4 h-48z" fill="url(#fgb)"/><g transform="translate(0 2.5)"><path d="M20 21 h8 l4.5 4.5 v12 q0 1.5-1.5 1.5 h-11 q-1.5 0-1.5-1.5 v-15 q0-1.5 1.5-1.5z" stroke="#2f6fd6" stroke-width="2" fill="none" stroke-dasharray="2.2 1.6"/></g></svg>
<div class="a nw fmt" style="left:268px;width:90px;text-align:center;top:266.6px;letter-spacing:0.287px;">Templates</div>
<svg class="i" style="left:377px;top:205px" width="52" height="52" viewBox="0 0 52 52"><path d="M0 5 q0-5 5-5 h13 l4 4 h25 q5 0 5 5 v38 q0 4-4 4 h-48z" fill="url(#ftb)"/>
<path d="M0 14.2 h18.5 q2 0 3.5-1.5 l1.5-1.5 q1.5-1.2 3.5-1.2 h21 q4 0 4 4 v33.7 q0 4-4 4 h-48z" fill="url(#fgb)"/><g transform="translate(0 2.5)"><rect x="22" y="24" width="17" height="11" rx="3" stroke="#2f6fd6" stroke-width="2" fill="none"/><path d="M14 24.5 L20 29.5 L14 34.5Z" fill="#2f6fd6"/></g></svg>
<div class="a nw fmt" style="left:358px;width:90px;text-align:center;top:266.6px;letter-spacing:0.128px;">Videos</div>
<div class="a nw mt" style="left:189px;top:488.1px;letter-spacing:0.181px;">8 folders, Free space: 13.5 GiB</div>
</div>
<div id="set" class="a win" style="left:61px;top:466px;width:712px;height:547px;border-radius:6px 6px 0 0">
<div class="a" style="left:0;top:0;width:712px;height:47px;border-radius:6px 6px 0 0;background:linear-gradient(#e2dfdb,#dad6d2);border-bottom:1px solid #c4bfba;box-shadow:inset 0 1px 0 #f6f4f2"></div>
<svg class="i" style="left:7px;top:12px" width="22" height="22" viewBox="0 0 22 22"><rect x="0.5" y="0.5" width="21" height="21" rx="3" fill="#f2f4f6" stroke="#c8d0d8" stroke-width="1"/><rect x="4.5" y="4.3" width="12" height="6" rx="3" fill="#00a8dc"/><circle cx="13.6" cy="7.3" r="2.3" fill="#fff"/><rect x="4.5" y="12" width="12" height="6" rx="3" fill="#a2abb3"/><circle cx="7.4" cy="15" r="2.3" fill="#e8eaec"/></svg>
<div class="a nw" style="left:0;width:712px;text-align:center;top:15.0px;font-weight:bold;letter-spacing:0.879px;color:#2e2e2e">Settings</div>
<div class="a" style="left:544px;top:7px;width:34px;height:33px;border-radius:5px;background:linear-gradient(#f6f5f4,#efedeb);border:1px solid #d8d4d0;box-shadow:0 1px 2px rgba(0,0,0,.12)"></div>
<svg class="i" style="left:552px;top:15px" width="18" height="18" viewBox="0 0 18 18"><circle cx="7.4" cy="7.4" r="5.6" fill="none" stroke="#2e3436" stroke-width="1.9"/><path d="M11.4 11.4 L16 16" stroke="#2e3436" stroke-width="2"/></svg>
<div class="a" style="left:605px;top:25px;width:8px;height:2px;background:#2e3436"></div>
<div class="a" style="left:645px;top:19px;width:8px;height:9px;border:2px solid #2e3436"></div>
<svg class="i" style="left:685px;top:19px" width="9" height="9" viewBox="0 0 9 9"><path d="M1 1 L8 8 M8 1 L1 8" stroke="#2e3436" stroke-width="2"/></svg>
<div class="a" style="left:8px;top:55px;width:696px;height:450px;background:#fff;border:1px solid #cdc7c2;overflow:hidden">
<div class="a nw hdr" style="left:6px;top:7.1px;letter-spacing:0.681px;">Personal</div>
<div class="a sep" style="left:6px;top:23px;width:682px"></div>
<div class="a nw hdr" style="left:6px;top:255.1px;letter-spacing:1.080px;">Hardware</div>
<div class="a sep" style="left:6px;top:271px;width:682px"></div>
<div class="a nw hdr" style="left:6px;top:391.1px;letter-spacing:0.869px;">System</div>
<div class="a sep" style="left:6px;top:407px;width:682px"></div>
<svg class="i" style="left:10px;top:28px" width="42" height="43" viewBox="0 0 42 43">
<rect x="1" y="1" width="8" height="40" rx="1" fill="#fff" stroke="#ccc" stroke-width=".6"/>
<rect x="2" y="3" width="6" height="6" fill="#f3b5a5"/><rect x="2" y="9.5" width="6" height="6" fill="#e98062"/><rect x="2" y="16" width="6" height="6" fill="#e2502a"/><rect x="2" y="22.5" width="6" height="6" fill="#c62a10"/><rect x="2" y="29" width="6" height="6" fill="#8a1a08"/>
<g transform="rotate(32 5 38)"><rect x="1" y="1" width="8" height="37" fill="#fff" stroke="#ccc" stroke-width=".6"/><rect x="2" y="3" width="6" height="6" fill="#faf0b0"/><rect x="2" y="9.5" width="6" height="6" fill="#f8e070"/><rect x="2" y="16" width="6" height="6" fill="#f2cc10"/><rect x="2" y="22.5" width="6" height="6" fill="#d8a808"/><rect x="2" y="29" width="6" height="6" fill="#a88008"/></g>
<g transform="rotate(58 5 38)"><rect x="1" y="1" width="8" height="37" fill="#fff" stroke="#ccc" stroke-width=".6"/><rect x="2" y="3" width="6" height="6" fill="#dcf8b8"/><rect x="2" y="9.5" width="6" height="6" fill="#b0ea70"/><rect x="2" y="16" width="6" height="6" fill="#78cc30"/><rect x="2" y="22.5" width="6" height="6" fill="#4aa018"/><rect x="2" y="29" width="6" height="6" fill="#2a7010"/></g>
<rect x="1" y="33" width="40" height="9" rx="1" fill="#fff" stroke="#ccc" stroke-width=".6"/>
<rect x="10" y="34" width="6" height="7" fill="#0a3a5a"/><rect x="16.5" y="34" width="6" height="7" fill="#0a6a9a"/><rect x="23" y="34" width="6" height="7" fill="#0aa8e0"/><rect x="29.5" y="34" width="6" height="7" fill="#60ccf0"/><rect x="36" y="34" width="4.5" height="7" fill="#c8ecfa"/>
<circle cx="5" cy="37.5" r="2" fill="#888"/></svg>
<div class="a nw st" style="left:57px;top:41.1px;letter-spacing:0.286px;">Appearance</div>
<svg class="i" style="left:192px;top:27px" width="45" height="44" viewBox="0 0 45 44">
<rect x="1" y="1" width="43.4" height="32.6" rx="2" fill="#d0d5d9" stroke="#8e979e" stroke-width="1"/>
<rect x="3.5" y="3.5" width="38.5" height="27.5" fill="#00a6dc" stroke="#26343f" stroke-width=".9"/>
<path d="M35 24 H41.5 V30.5 H35Z" fill="#2e3e4a"/><path d="M35 24 H41.5 L35 30.5Z" fill="#cdeef9"/>
<path transform="translate(0.5 3.5)" d="M5 3.7 L5.3 3.3 C9 4.5 13 6.5 15.5 9.5 C18 8.5 22 8.5 26 9 L26.5 6 L28 7.5 L29 5.8 L30.5 9 C33.5 9.5 35 11 34.5 13 C33 14.5 30 15.5 29 17 L29 19.5 L30.5 21 L27.5 21.5 L26 19.5 C22.5 20 18.5 20.5 16 20 L13.5 22.5 L14.5 19.5 L12.5 19 L14.5 17 C13.5 14.5 14 12 15 10.5 C12 7.5 8.5 5 5 3.7Z" fill="#050505"/>
<defs><linearGradient id="stand" x1="0" y1="0" x2="0" y2="1"><stop offset="0" stop-color="#7a848c"/><stop offset=".5" stop-color="#b8c0c6"/><stop offset="1" stop-color="#d8dde0"/></linearGradient></defs>
<rect x="15" y="33.5" width="15.5" height="9" rx="2.2" fill="url(#stand)" stroke="#a8b0b6" stroke-width=".5"/></svg>
<div class="a nw st" style="left:241px;top:41.1px;letter-spacing:0.378px;">Desktop</div>
<svg class="i" style="left:380px;top:28px" width="41" height="43" viewBox="0 0 41 43">
<defs><linearGradient id="wood" x1="0" x2="1"><stop offset="0" stop-color="#8a5a18"/><stop offset=".5" stop-color="#c09018"/><stop offset="1" stop-color="#8a5a18"/></linearGradient></defs>
<rect x="1.3" y="1.2" width="35.4" height="22.6" rx="3" fill="#a6aeb5" stroke="#3e4e5c" stroke-width="1"/>
<path d="M1.3 18 H36.7 V21 q0 2.8-2.8 2.8 H4.1 q-2.8 0-2.8-2.8z" fill="#4f5f6c"/>
<path d="M18.7 4.5 L14 13 H23.4Z M16 9 q2.7 3 5.4 0" stroke="#e6e8ea" stroke-width="1" fill="none"/>
<path d="M10 12 q-3 0-3-2 q0-2 3-2 q2 0 2 2 q0 2-3 2 M12 9 h3" stroke="#e6e8ea" stroke-width=".9" fill="none"/>
<path d="M28 12 q3 0 3-2 q0-2-3-2 q-2 0-2 2 q0 2 3 2 M26 9 h-3" stroke="#e6e8ea" stroke-width=".9" fill="none"/>
<rect x="14" y="21.5" width="9.8" height="20.3" rx="2.5" fill="url(#wood)" stroke="#5a3a18" stroke-width=".6"/>
<path d="M14 27 L24 29.5 L31 27.5 L32.5 30.5 L24 34 L14 38 L5 40 L7.5 36.5 L14 34.5 L22 31.5 L14 30Z" fill="#e03a14"/></svg>
<div class="a nw st" style="left:425px;top:33.1px;letter-spacing:0.109px;">File Manager</div>
<div class="a nw st" style="left:425px;top:49.8px;letter-spacing:0.388px;">Settings</div>
<svg class="i" style="left:12px;top:84px" width="38" height="42" viewBox="0 0 38 42">
<defs><linearGradient id="bellg" x1="0" x2="1"><stop offset="0" stop-color="#f6d420"/><stop offset=".3" stop-color="#eccb00"/><stop offset="1" stop-color="#d2a600"/></linearGradient>
<linearGradient id="brimg" x1="0" x2="1"><stop offset="0" stop-color="#d8b850"/><stop offset=".3" stop-color="#aa7a08"/><stop offset="1" stop-color="#a87808"/></linearGradient></defs>
<path d="M4 32 C5.5 22 6.5 11 9.5 6 C11.5 2.5 15 1 19.5 1 C24 1 27.5 2.5 29.5 6 C32.5 11 33.5 22 35 32Z" fill="url(#bellg)"/>
<rect x="3.5" y="28.5" width="32" height="3.5" fill="url(#brimg)"/>
<rect x="1" y="31.5" width="36" height="4" fill="#e8c400"/>
<circle cx="19.8" cy="37.8" r="3.2" fill="#f4d000"/></svg>
<div class="a nw st" style="left:57px;top:97.1px;letter-spacing:0.424px;">Notifications</div>
<svg class="i" style="left:194px;top:84px" width="42" height="42" viewBox="0 0 42 42">
<rect x="1.1" y="1.1" width="39.8" height="39.6" rx="2.2" fill="#00a6dc" stroke="#0a7aa0" stroke-width=".6"/>
<path d="M1.1 27 H40.9 V38.5 q0 2.2-2.2 2.2 H3.3 q-2.2 0-2.2-2.2Z" fill="#4a5e6a"/><rect x="1.1" y="26.5" width="39.8" height="1" fill="#1e2a32"/><rect x="1.1" y="23.5" width="39.8" height="3" fill="#0a90c0" opacity=".6"/>
<rect x="3.5" y="29.8" width="7" height="7" rx="1.6" fill="#d6aee6" stroke="#7a2a98" stroke-width=".9"/><rect x="12.8" y="29.8" width="7" height="7" rx="1.6" fill="#d6aee6" stroke="#7a2a98" stroke-width=".9"/><rect x="22.1" y="29.8" width="7" height="7" rx="1.6" fill="#d6aee6" stroke="#7a2a98" stroke-width=".9"/><rect x="31.4" y="29.8" width="7" height="7" rx="1.6" fill="#d6aee6" stroke="#7a2a98" stroke-width=".9"/></svg>
<div class="a nw st" style="left:241px;top:97.1px;letter-spacing:-0.180px;">Panel</div>
<svg class="i" style="left:381px;top:83px" width="41" height="44" viewBox="0 0 41 44">
<path d="M1 3.5 q0-2.5 2.5-2.5 h29 q2.5 0 2.5 2.5 V40.5 q0 2.5-2.5 2.5 h-29 q-2.5 0-2.5-2.5z" fill="#00a6dc"/>
<rect x="1" y="10" width="34" height="31.5" fill="#eef0f4"/><rect x="1" y="9.3" width="34" height="1" fill="#0a6a8a" opacity=".6"/><rect x="2" y="41" width="32" height="1" fill="#d8dadc"/>
<path d="M8 1.2 L14 4" stroke="#000" stroke-width=".7"/><path d="M14 4 q3-1.5 6-1 l1-1.5 l.8 1 l.8-.8 l.6 1.6 q2 .6 1.6 1.8 q-1.2 1-3 1.3 l-.3 2 l-1.6-1 q-2 .2-4 .1 l-1.5 1.2 l.2-1.8 q-1.5-1.5-.6-2.9z" fill="#000"/>
<path d="M31 41.5 L35 37.5 V41.5Z" fill="#ffffff"/><path d="M31 41.5 L35 37.5" stroke="#9aa0a4" stroke-width=".5"/>
<path d="M6.1 29.4 L32.6 3.2 L34.67 5.3 L8.33 31.6Z" fill="#f8e680"/>
<path d="M8.33 31.6 L34.67 5.3 L36.73 7.4 L10.57 33.8Z" fill="#f6d400"/>
<path d="M10.57 33.8 L36.73 7.4 L38.8 9.5 L12.8 36Z" fill="#dcb400"/>
<path d="M6.1 29.4 L12.8 36 L4.2 37.4Z" fill="#f6eec6"/><path d="M4.2 37.4 L5.1 34.5 L7.2 36.5Z" fill="#2e3436"/></svg>
<div class="a nw st" style="left:425px;top:97.1px;letter-spacing:0.300px;">Text Editor Settings</div>
<svg class="i" style="left:9px;top:142px" width="45" height="41" viewBox="0 0 45 41">
<rect x="8" y="0.5" width="36" height="29.5" rx="3" fill="#00a6dc"/>
<rect x="4.5" y="5" width="36" height="29.5" rx="3" fill="#62cdf0"/>
<rect x="0.6" y="10" width="35.5" height="30" rx="3" fill="#eef0f2" stroke="#c8ced3" stroke-width="1"/>
<path d="M13.5 20.5 L22.5 29.5 M22.5 20.5 L13.5 29.5" stroke="#1ea6dc" stroke-width="3.4"/></svg>
<div class="a nw st" style="left:57px;top:153.1px;letter-spacing:0.267px;">Window Manager</div>
<svg class="i" style="left:193px;top:142px" width="45" height="41" viewBox="0 0 45 41">
<rect x="8" y="0.5" width="36" height="29.5" rx="3" fill="#00a6dc"/>
<rect x="4.5" y="5" width="36" height="29.5" rx="3" fill="#62cdf0"/>
<rect x="0.6" y="10" width="35.5" height="30" rx="3" fill="#eef0f2" stroke="#c8ced3" stroke-width="1"/><path d="M15.55 29.49 L17.82 29.69 L17.82 32.11 L15.55 32.31 L14.66 34.46 L16.12 36.21 L14.41 37.92 L12.66 36.46 L10.51 37.35 L10.31 39.62 L7.89 39.62 L7.69 37.35 L5.54 36.46 L3.79 37.92 L2.08 36.21 L3.54 34.46 L2.65 32.31 L0.38 32.11 L0.38 29.69 L2.65 29.49 L3.54 27.34 L2.08 25.59 L3.79 23.88 L5.54 25.34 L7.69 24.45 L7.89 22.18 L10.31 22.18 L10.51 24.45 L12.66 25.34 L14.41 23.88 L16.12 25.59 L14.66 27.34Z" fill="#f2c200" stroke="#b88a00" stroke-width=".7" stroke-linejoin="round"/><circle cx="9.1" cy="30.9" r="3.4" fill="#fff" stroke="#b88a00" stroke-width=".6"/></svg>
<div class="a nw st" style="left:241px;top:145.1px;letter-spacing:0.267px;">Window Manager</div>
<div class="a nw st" style="left:241px;top:161.8px;letter-spacing:-0.156px;">Tweaks</div>
<svg class="i" style="left:378px;top:141px" width="42" height="42" viewBox="0 0 42 42">
<rect x="0.8" y="0.8" width="40.4" height="40.4" rx="3" fill="#d2d6da" stroke="#b8bec4" stroke-width=".8"/>
<path d="M0.8 20.5 V3.8 q0-3 3-3 H20.5 V20.5Z" fill="#00a6dc"/>
<path d="M21 21 H41.2 V38 q0 3.2-3 3.2 H21Z" fill="#eceef0"/>
<path d="M20.8 0.8 V41.2 M0.8 20.8 H41.2" stroke="#b0b6bc" stroke-width=".8"/>
<path d="M31 26 V36 M26 31 H36" stroke="#2a3a48" stroke-width="2.4"/></svg>
<div class="a nw st" style="left:425px;top:153.1px;letter-spacing:0.118px;">Workspaces</div>
<svg class="i" style="left:9px;top:197px" width="45" height="43" viewBox="0 0 45 43">
<rect x="0.7" y="0.7" width="42.6" height="40.6" rx="3.5" fill="#cdd2d6" stroke="#9aa2a8" stroke-width=".8"/>
<rect x="4" y="4" width="36" height="34" rx="1" fill="#22303c"/>
<path d="M7.5 8 L14 11.2 L7.5 14.4" stroke="#fff" stroke-width="1.9" fill="none"/><rect x="16" y="15.5" width="7.5" height="2" fill="#fff"/><path d="M40.64 28.56 L42.92 28.78 L42.92 31.22 L40.64 31.44 L39.74 33.61 L41.20 35.37 L39.47 37.10 L37.71 35.64 L35.54 36.54 L35.32 38.82 L32.88 38.82 L32.66 36.54 L30.49 35.64 L28.73 37.10 L27.00 35.37 L28.46 33.61 L27.56 31.44 L25.28 31.22 L25.28 28.78 L27.56 28.56 L28.46 26.39 L27.00 24.63 L28.73 22.90 L30.49 24.36 L32.66 23.46 L32.88 21.18 L35.32 21.18 L35.54 23.46 L37.71 24.36 L39.47 22.90 L41.20 24.63 L39.74 26.39Z" fill="#f2c200" stroke="#b88a00" stroke-width=".7" stroke-linejoin="round"/><circle cx="34.1" cy="30" r="3.6" fill="#22303c" stroke="#b88a00" stroke-width=".6"/></svg>
<div class="a nw st" style="left:57px;top:201.1px;letter-spacing:0.262px;">Xfce Terminal</div>
<div class="a nw st" style="left:57px;top:217.8px;letter-spacing:0.388px;">Settings</div>
<svg class="i" style="left:8px;top:276px" width="46" height="43" viewBox="0 0 46 43">
<rect x="0.8" y="0.8" width="44.4" height="32" rx="2" fill="#c8ced3" stroke="#8a949c" stroke-width="1"/>
<rect x="3" y="3" width="40" height="27.5" fill="#1a232b"/>
<path d="M5 29 L41 6 L41 29Z" fill="#f2c418"/><path d="M20 25 L35 15 L35 25Z" fill="#1a232b"/>
<path d="M8 29v-2M11 29v-1.5M14 29v-2M17 29v-1.5M20 29v-2M23 29v-1.5M26 29v-2M29 29v-1.5M32 29v-2M35 29v-1.5M38 29v-2" stroke="#8a6a08" stroke-width=".6"/>
<rect x="15" y="33" width="15.5" height="9.5" rx="2.2" fill="url(#stand)" stroke="#a8b0b6" stroke-width=".5"/></svg>
<div class="a nw st" style="left:57px;top:289.1px;letter-spacing:0.336px;">Display</div>
<svg class="i" style="left:192px;top:283px" width="46" height="28" viewBox="0 0 46 28">
<rect x="1.4" y="1.2" width="43" height="25.8" rx="3" fill="#e8ebee" stroke="#c4cace" stroke-width="1"/><rect x="5.0" y="5.0" width="4.0" height="2.6" fill="#6c757d"/><rect x="12.6" y="5.0" width="2.5" height="2.6" fill="#a9b1b7"/><rect x="17.6" y="5.0" width="2.5" height="2.6" fill="#a9b1b7"/><rect x="22.6" y="5.0" width="2.5" height="2.6" fill="#a9b1b7"/><rect x="27.6" y="5.0" width="2.5" height="2.6" fill="#a9b1b7"/><rect x="32.6" y="5.0" width="2.5" height="2.6" fill="#a9b1b7"/><path d="M36.4 5 H40.8 V12.6 H38 V7.6 H36.4Z" fill="#6c757d"/><rect x="5.0" y="10.0" width="5.8" height="2.6" fill="#6c757d"/><rect x="14.5" y="10.0" width="2.5" height="2.6" fill="#a9b1b7"/><rect x="19.5" y="10.0" width="2.5" height="2.6" fill="#a9b1b7"/><rect x="24.5" y="10.0" width="2.5" height="2.6" fill="#a9b1b7"/><rect x="29.5" y="10.0" width="2.5" height="2.6" fill="#a9b1b7"/><rect x="34.5" y="10.0" width="2.5" height="2.6" fill="#a9b1b7"/><rect x="6.4" y="15.0" width="2.5" height="2.6" fill="#a9b1b7"/><rect x="11.4" y="15.0" width="2.5" height="2.6" fill="#a9b1b7"/><rect x="16.4" y="15.0" width="2.5" height="2.6" fill="#a9b1b7"/><rect x="21.4" y="15.0" width="2.5" height="2.6" fill="#a9b1b7"/><rect x="26.4" y="15.0" width="2.5" height="2.6" fill="#a9b1b7"/><rect x="31.4" y="15.0" width="2.5" height="2.6" fill="#a9b1b7"/><rect x="35.0" y="15.0" width="5.8" height="2.6" fill="#6c757d"/><rect x="6.4" y="20.0" width="2.5" height="2.6" fill="#a9b1b7"/><rect x="11.4" y="20.0" width="18.1" height="2.6" fill="#6c757d"/><rect x="34.5" y="20.0" width="2.5" height="2.6" fill="#a9b1b7"/><rect x="39.5" y="20.0" width="2.5" height="2.6" fill="#a9b1b7"/></svg>
<div class="a nw st" style="left:241px;top:289.1px;letter-spacing:0.172px;">Keyboard</div>
<svg class="i" style="left:385px;top:276px" width="28" height="43" viewBox="0 0 28 43">
<path d="M1 14 V12 C1 5 6 1 14 1 C22 1 27 5 27 12 V30 C27 37 21 42 14 42 C7 42 1 37 1 30Z" fill="#eceef0" stroke="#c0c6cc" stroke-width="1"/>
<path d="M1.5 15 H26.5 M14 1.5 V15" stroke="#c8cdd2" stroke-width="1"/><rect x="12.8" y="4" width="2.4" height="7" fill="#555e66"/></svg>
<div class="a nw st" style="left:425px;top:281.1px;letter-spacing:0.189px;">Mouse and</div>
<div class="a nw st" style="left:425px;top:297.8px;letter-spacing:0.154px;">Touchpad</div>
<svg class="i" style="left:14px;top:332px" width="34" height="43" viewBox="0 0 34 43">
<defs><linearGradient id="pwg" x1="0" x2="1"><stop offset="0" stop-color="#58b81a"/><stop offset=".12" stop-color="#9ae45a"/><stop offset=".35" stop-color="#6ccc28"/><stop offset=".85" stop-color="#58bc18"/><stop offset="1" stop-color="#9ae45a"/></linearGradient></defs>
<path d="M1.4 9.5 V33 C1.4 38.5 8.5 41.5 17 41.5 C25.5 41.5 32.6 38.5 32.6 33 V9.5Z" fill="url(#pwg)" stroke="#3e9a12" stroke-width=".8"/>
<ellipse cx="17" cy="9.5" rx="15.6" ry="8" fill="#22303c" stroke="#3e9a12" stroke-width=".6"/>
<ellipse cx="17" cy="7.6" rx="3.5" ry="2.7" fill="#d2d6da"/>
<path d="M19 21 L13.5 30 H17 L15 37 L20.5 28 H17Z" fill="#1e2a22"/></svg>
<div class="a nw st" style="left:57px;top:345.1px;letter-spacing:0.135px;">Power Manager</div>
<svg class="i" style="left:10px;top:412px" width="42" height="42" viewBox="0 0 42 42">
<rect x="0.5" y="0.5" width="41" height="41" rx="3" fill="#00a6dc"/>
<circle cx="21" cy="7.8" r="4" fill="#fff"/>
<path d="M9 14.2 H33 q1.5 0 1.5 1.5 q0 1.5-1.5 1.5 L25.5 18 L25 26 L29.5 41 H25 L21 29.5 L17 41 H12.5 L17 26 L16.5 18 L9 17.2 q-1.5 0-1.5-1.5 q0-1.5 1.5-1.5Z" fill="#fff"/></svg>
<div class="a nw st" style="left:57px;top:425.1px;letter-spacing:0.309px;">Accessibility</div>
<svg class="i" style="left:194px;top:412px" width="43" height="42" viewBox="0 0 43 42">
<rect x="0.5" y="0.5" width="20.5" height="20.5" fill="#d2321a"/><rect x="21.5" y="0.5" width="20.5" height="20.5" fill="#4cae26"/>
<rect x="0.5" y="21.5" width="20.5" height="20.5" fill="#0a6a8a"/><rect x="21.5" y="21.5" width="20.5" height="20.5" fill="#9a3ab8"/>
<path d="M7 16 L9 11 A5 5 0 1 1 12 15" stroke="#fff" stroke-width="1.6" fill="none"/>
<circle cx="31.7" cy="10.7" r="4.5" fill="none" stroke="#e8f8e0" stroke-width="1.4"/><circle cx="31.7" cy="10.7" r="1.8" fill="none" stroke="#e8f8e0" stroke-width="1.2"/>
<rect x="4.5" y="26" width="12" height="11" fill="none" stroke="#d8ecf2" stroke-width="1.1"/><path d="M7 29 L9 31 L7 33 M10 34 h3" stroke="#d8ecf2" stroke-width="1" fill="none"/>
<rect x="27" y="26" width="9.5" height="11.5" fill="none" stroke="#ecd8f2" stroke-width="1.1"/><path d="M29 30h5.5M29 33.5h5.5" stroke="#ecd8f2" stroke-width="1"/></svg>
<div class="a nw st" style="left:241px;top:417.1px;letter-spacing:0.526px;">Default</div>
<div class="a nw st" style="left:241px;top:433.8px;letter-spacing:0.355px;">Applications</div>
<svg class="i" style="left:378px;top:412px" width="42" height="42" viewBox="0 0 42 42">
<rect x="0.5" y="0.5" width="41" height="41" rx="3" fill="#00a6dc"/>
<path d="M20.5 5 C16 10 15 17 15.5 28 H25.5 C26 17 25 10 20.5 5Z" fill="#eceef0"/>
<path d="M20.5 5 L17 10 H24Z" fill="#e2542a"/>
<circle cx="20.5" cy="15" r="2.2" fill="#1ea6dc"/>
<path d="M15.5 20 L10 29 L15.5 27.5Z M25.5 20 L31 29 L25.5 27.5Z" fill="#e2542a"/>
<path d="M17.5 28 L20.5 37 L23.5 28Z" fill="#f6c418"/><rect x="19.7" y="18" width="1.6" height="14" fill="#d8381a"/></svg>
<div class="a nw st" style="left:425px;top:417.1px;letter-spacing:0.113px;">Session and</div>
<div class="a nw st" style="left:425px;top:433.8px;letter-spacing:0.518px;">Startup</div>
</div>
<div class="a btn" style="left:3px;top:512px;width:119px;height:33px;"></div>
<svg class="i" style="left:38px;top:519px" width="18" height="18" viewBox="0 0 18 18"><circle cx="9" cy="9" r="8" fill="#2e3436"/><ellipse cx="9" cy="3.6" rx="2.1" ry="1.4" fill="#fff"/><ellipse cx="9" cy="14.4" rx="2.1" ry="1.4" fill="#fff"/><ellipse cx="3.6" cy="9" rx="1.4" ry="2.1" fill="#fff"/><ellipse cx="14.4" cy="9" rx="1.4" ry="2.1" fill="#fff"/><circle cx="9" cy="9" r="2.6" fill="#fff"/><circle cx="9" cy="9" r="1.3" fill="#c8c8c8"/></svg>
<div class="a nw st" style="left:56px;top:520.1px;letter-spacing:0.286px;">Help</div>
<div class="a btn" style="left:464px;top:512px;width:120px;height:33px;background:#f9f8f7;border-color:#dcd7d2;box-shadow:none"></div>
<svg class="i" style="left:481px;top:520px" width="10" height="16" viewBox="0 0 10 16"><path d="M8 1.5 L2.5 8 L8 14.5" stroke="#8f9294" stroke-width="1.8" fill="none"/></svg>
<div class="a nw mt" style="left:496px;top:520.1px;letter-spacing:0.318px;">All Settings</div>
<div class="a btn" style="left:590px;top:512px;width:120px;height:33px;"></div>
<svg class="i" style="left:626px;top:522px" width="11" height="11" viewBox="0 0 11 11"><path d="M1.5 1.5 L9.5 9.5 M9.5 1.5 L1.5 9.5" stroke="#2e3436" stroke-width="2.2"/></svg>
<div class="a nw st" style="left:641px;top:520.1px;letter-spacing:-0.094px;">Close</div>
</div>
<div id="dock" class="a" style="left:807px;top:1031px;width:306px;height:49px;background:#353535;border:1px solid #2a1e1e;border-bottom:0">
<svg class="i" style="left:3px;top:3px" width="43" height="41" viewBox="0 0 43 41"><defs><clipPath id="sdc"><rect x="0.5" y="0.5" width="42" height="40" rx="4"/></clipPath></defs>
<g clip-path="url(#sdc)"><rect x="0" y="0" width="43" height="41" fill="#00a9de"/><rect x="0" y="27" width="43" height="14" fill="#4a5d6b"/><rect x="0" y="26.5" width="43" height="1" fill="#2e3e4a"/></g></svg>
<div class="a" style="left:51px;top:8px;width:2px;height:35px;background:#9d9d9d"></div>
<svg class="i" style="left:61px;top:6px" width="39" height="37" viewBox="0 0 39 37">
<rect x="0.5" y="0.5" width="38" height="35.5" rx="3" fill="#dde1e4" stroke="#aab0b5" stroke-width=".6"/><rect x="3.5" y="3" width="32" height="29.5" fill="#22303c"/>
<path d="M5.3 6.6 L9.6 9.2 L5.3 11.8" stroke="#fff" stroke-width="1.5" fill="none"/><rect x="11" y="13.6" width="5.3" height="1.5" fill="#fff"/></svg>
<svg class="i" style="left:113px;top:5px" width="31" height="38" viewBox="0 0 31 38">
<rect x="0.8" y="0.8" width="29.4" height="36" rx="3" fill="#00a6dc" stroke="#dfe4e8" stroke-width="1.4"/><path d="M1 18.5 H30" stroke="#1a7aa8" stroke-width="1.2"/><path d="M1 19.6 H30" stroke="#3fc0ea" stroke-width=".8"/>
<rect x="11" y="8" width="9" height="2" rx=".5" fill="#9aa6ae"/><rect x="11" y="25" width="9" height="2" rx=".5" fill="#9aa6ae"/></svg>
<svg class="i" style="left:155px;top:3px" width="44" height="46" viewBox="0 0 44 46">
<circle cx="22" cy="22" r="20.8" fill="#00a6dc"/>
<path d="M4 13.5 Q8 6 16 2 L19 2.5 Q20 8 16.5 12 L12 14 Q9 17 10 19 L6 20 Q3 17 4 13.5Z M23 9 Q25 5 30 3.5 Q37 6 40.5 13 Q41.5 20 40 26 Q37 33 31 39.5 L28.5 36 Q29 30 27 27 Q23 25 23 21 Q24 17 28 16.5 Q25 13 23 9Z" fill="#66cdee"/>
<path d="M18 10 q-3 2-4 5 M30 15 q3-1 6 0 M33 17 q2 1 4 3" stroke="#0a8cc0" stroke-width=".8" fill="none"/>
<path d="M16.5 18 L0.3 32.5 L8 33.2 L5.2 41 Q6 44 10 43 L13.2 35.8 L16.8 39.6Z" fill="#eef0f2" stroke="#c8ced3" stroke-width=".5"/></svg>
<svg class="i" style="left:206px;top:6px" width="37" height="37" viewBox="0 0 37 37"><defs><linearGradient id="lens" x1="0" y1="0" x2="0" y2="1"><stop offset="0" stop-color="#2cb4e6"/><stop offset="1" stop-color="#c4ecfa"/></linearGradient></defs>
<rect x="0.5" y="0.5" width="36" height="35" rx="3" fill="#d8dde1" stroke="#b8bec3" stroke-width=".6"/>
<g fill="#5ccbee"><rect x="3" y="3" width="6" height="6"/><rect x="11" y="3" width="6" height="6"/><rect x="19" y="3" width="6" height="6"/><rect x="27" y="3" width="6" height="6"/><rect x="3" y="11" width="6" height="6"/><rect x="27" y="11" width="6" height="6"/><rect x="3" y="19" width="6" height="6"/><rect x="3" y="27" width="6" height="6"/><rect x="11" y="27" width="6" height="6"/></g>
<circle cx="15" cy="15" r="9.8" fill="url(#lens)" stroke="#1f2e3b" stroke-width="1.3"/><path d="M22.5 22.5 L32.5 32" stroke="#1f2e3b" stroke-width="3.3"/><path d="M21.5 21.5 L23.8 23.8" stroke="#e0b800" stroke-width="3.3"/></svg>
<div class="a" style="left:251px;top:8px;width:2px;height:35px;background:#9d9d9d"></div>
<svg class="i" style="left:260px;top:4px" width="41" height="41" viewBox="0 0 41 41">
<path d="M0.5 4 q0-3 3-3 h10 q2 0 3.5 2 l2 2 h18 q3 0 3 3 v30 q0 2-2 2 h-35.5 q-2 0-2-2z" fill="#2f78dc"/>
<path d="M0.5 12 q0-2 2-2 h13 l4-4 h18 q3 0 3 3 v28 q0 3-3 3 h-35 q-2 0-2-2z" fill="url(#fgb)"/></svg>
</div>
</body></html>
